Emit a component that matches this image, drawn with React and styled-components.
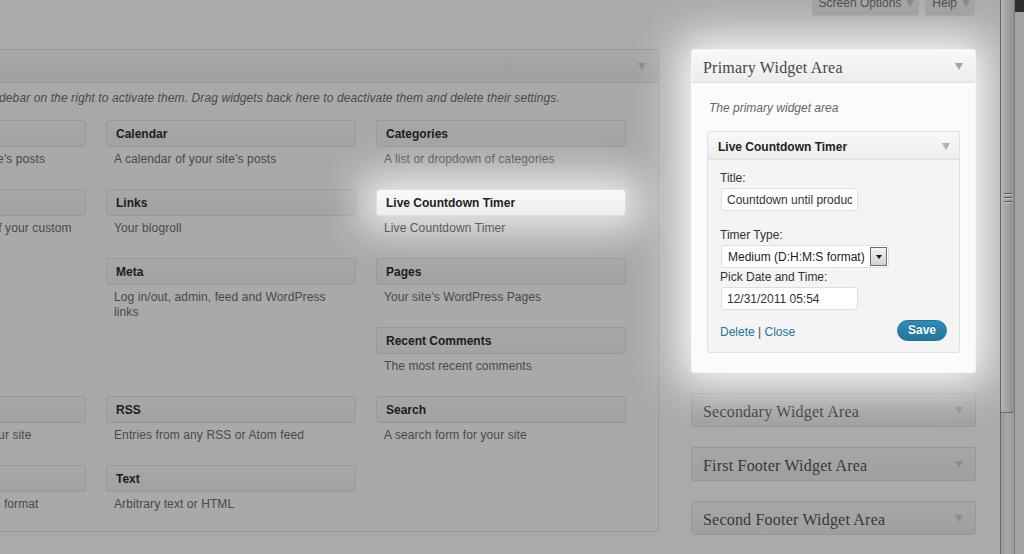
import React from 'react';
import styled, { createGlobalStyle, css } from 'styled-components';

const GlobalStyle = createGlobalStyle`
  html, body {
    margin: 0;
    padding: 0;
    overflow: hidden;
    background: #aaaaaa;
  }
  body {
    font-family: "Liberation Sans", Arial, sans-serif;
    font-size: 12px;
    color: #333;
  }
`;

const Page = styled.div`
  display: flex;
  width: 1024px;
  height: 554px;
  background: #aaaaaa;
`;

const Main = styled.div`
  position: relative;
  flex: none;
  width: 1000px;
  height: 554px;
  overflow: hidden;
  padding-right: 25px;
  box-sizing: border-box;
`;

/* ---------- top tabs ---------- */

const TopBar = styled.div`
  position: relative;
  z-index: 3;
  display: flex;
  justify-content: flex-end;
  align-items: flex-start;
  gap: 6px;
  height: 15px;
`;

const ScreenTab = styled.div`
  display: flex;
  align-items: center;
  gap: 5px;
  height: 24px;
  margin-top: -9px;
  padding: 0 5px 0 7px;
  background: linear-gradient(#a7a7a7, #a1a1a1);
  border-radius: 0 0 3px 3px;
  box-shadow: 0 1px 1px rgba(0, 0, 0, 0.08);
  color: #4e4e4e;
  line-height: 24px;
`;

const Caret = styled.span`
  display: inline-block;
  flex: none;
  width: 0;
  height: 0;
  border-left: ${(p) => p.$size || 4}px solid transparent;
  border-right: ${(p) => p.$size || 4}px solid transparent;
  border-top: ${(p) => (p.$size ? p.$size + 1 : 7)}px solid ${(p) => p.$color || '#8c8c8c'};
`;

/* ---------- column layout ---------- */

const Columns = styled.div`
  display: flex;
  align-items: flex-start;
  gap: 32px;
  margin-top: 34px;
  margin-left: -179px;
`;

// soft white halo painted behind an element's own content
const halo = ({ blur, spread, alpha, height = null }) => css`
  position: relative;
  z-index: 1;
  &::before {
    content: '';
    position: absolute;
    top: 0;
    left: 0;
    right: 0;
    ${height ? `height: ${height}px;` : 'bottom: 0;'}
    z-index: -1;
    border-radius: 4px;
    box-shadow: 0 0 ${blur}px ${spread}px rgba(255, 255, 255, ${alpha});
  }
`;

/* ---------- available widgets ---------- */

const AvailablePanel = styled.section`
  flex: none;
  width: 838px;
  box-sizing: border-box;
  border: 1px solid #989898;
  border-radius: 3px;
  background: #a9a9a9;
`;

const PanelHeader = styled.div`
  display: flex;
  align-items: center;
  justify-content: space-between;
  box-sizing: border-box;
  padding: 3px 12px 0 11px;
  border-bottom: 1px solid ${(p) => (p.$lit ? '#dfdfdf' : '#999999')};
  border-radius: 3px 3px 0 0;
  background: ${(p) =>
    p.$lit ? 'linear-gradient(#f9f9f9, #ececec)' : 'linear-gradient(#a7a7a7, #9f9f9f)'};
  font-family: "Liberation Serif", "Times New Roman", serif;
  font-size: 16px;
  letter-spacing: 0.2px;
  color: ${(p) => (p.$lit ? '#464646' : '#383838')};
  ${(p) =>
    p.$collapsed
      ? css`
          height: 32px;
          border-bottom: none;
          border-radius: 3px;
        `
      : css`
          height: 33px;
        `}
`;

const HeaderCaret = styled(Caret)`
  margin-top: -3px;
`;

const HolderNote = styled.p`
  margin: 8px 0 14px 14px;
  font-style: italic;
  line-height: 15px;
  letter-spacing: 0.1px;
  color: #4a4a4a;
  white-space: nowrap;
`;

const WidgetGrid = styled.div`
  display: grid;
  grid-template-columns: repeat(3, 250px);
  grid-template-rows: repeat(5, 69px) 52px;
  column-gap: 20px;
  padding: 0 0 14px 14px;
`;

const WidgetCell = styled.div`
  ${(p) => p.$lit && halo({ blur: 36, spread: 16, alpha: 0.7, height: 27 })}
`;

const WidgetTitle = styled.div`
  height: 25px;
  padding: 0 9px;
  border: 1px solid ${(p) => (p.$lit ? '#dddddd' : '#989898')};
  border-radius: 3px;
  background: ${(p) =>
    p.$lit ? 'linear-gradient(#f9f9f9, #ededed)' : 'linear-gradient(#a7a7a7, #a2a2a2)'};
  font-weight: bold;
  line-height: 26px;
  color: ${(p) => (p.$lit ? '#222' : '#1c1c1c')};
`;

const WidgetDesc = styled.div`
  margin-top: 5px;
  padding: 0 8px;
  line-height: 15px;
  letter-spacing: 0.1px;
  color: ${(p) => (p.$lit ? '#5a5a5a' : '#484848')};
`;

/* ---------- sidebars ---------- */

const Sidebar = styled.div`
  flex: none;
  display: flex;
  flex-direction: column;
  gap: 20px;
  width: 285px;
`;

const SidebarPanel = styled.section`
  box-sizing: border-box;
  border: 1px solid ${(p) => (p.$lit ? '#dfdfdf' : '#979797')};
  border-radius: 3px;
  background: ${(p) => (p.$lit ? '#fbfbfb' : '#a5a5a5')};
  ${(p) => p.$lit && halo({ blur: 44, spread: 14, alpha: 0.93 })}
`;

const SidebarBody = styled.div`
  padding: 0 15px 19px;
`;

const SidebarNote = styled.p`
  margin: 0 0 15px;
  padding: 18px 2px 0;
  font-style: italic;
  line-height: 15px;
  color: #666;
`;

const OpenWidget = styled.div`
  border: 1px solid #dfdfdf;
  border-radius: 3px;
  background: #f4f4f4;
`;

const OpenWidgetHeader = styled.div`
  display: flex;
  align-items: center;
  justify-content: space-between;
  height: 28px;
  box-sizing: border-box;
  padding: 2px 9px 0 10px;
  border-bottom: 1px solid #dfdfdf;
  border-radius: 3px 3px 0 0;
  background: linear-gradient(#f9f9f9, #ececec);
  font-weight: bold;
  color: #222;
`;

const OpenWidgetBody = styled.div`
  padding: 9px 12px 11px;
`;

const FieldLabel = styled.label`
  display: block;
  margin-top: ${(p) => p.$gap || 0}px;
  padding-top: 2px;
  line-height: 15px;
  color: #333;
`;

const TextField = styled.input`
  display: block;
  width: 137px;
  height: 23px;
  box-sizing: border-box;
  margin: 2px 0 0 1px;
  padding: 0 5px;
  border: 1px solid #dfdfdf;
  border-radius: 3px;
  background: #fff;
  font-family: "Liberation Sans", Arial, sans-serif;
  font-size: 12px;
  color: #333;
  outline: none;
`;

const SelectBox = styled.div`
  display: flex;
  align-items: center;
  justify-content: space-between;
  width: 168px;
  height: 23px;
  box-sizing: border-box;
  margin: 2px 0 0 1px;
  padding: 0 1px 0 6px;
  border: 1px solid #dfdfdf;
  border-radius: 3px;
  background: #fff;
  color: #222;
`;

const DropButton = styled.span`
  display: flex;
  align-items: center;
  justify-content: center;
  width: 17px;
  height: 19px;
  box-sizing: border-box;
  border: 1px solid #6d6d6d;
  background: linear-gradient(#f2f2f2, #d2d2d2);
`;

const Actions = styled.div`
  display: flex;
  align-items: center;
  justify-content: space-between;
  margin-top: 10px;
`;

const LinkRow = styled.div`
  padding-top: 3px;
  color: #464646;
  line-height: 15px;
`;

const Link = styled.a`
  color: #21759b;
  text-decoration: none;
`;

const SaveButton = styled.button`
  height: 21px;
  padding: 0 10px;
  border: 1px solid #21759b;
  border-radius: 11px;
  background: linear-gradient(#2e8cbc, #21759b);
  font-family: "Liberation Sans", Arial, sans-serif;
  font-size: 12px;
  font-weight: bold;
  color: #fff;
  text-shadow: 0 -1px 0 rgba(0, 0, 0, 0.3);
  line-height: 19px;
`;

/* ---------- scrollbar ---------- */

const ScrollBar = styled.div`
  flex: none;
  display: flex;
  width: 24px;
  height: 554px;
`;

const Track = styled.div`
  width: 15px;
  box-sizing: border-box;
  border-left: 1px solid #666;
  border-right: 1px solid #7c7c7c;
  background: linear-gradient(to right, #9a9a9a, #a6a6a6 50%, #9c9c9c);
`;

const Thumb = styled.div`
  display: flex;
  flex-direction: column;
  align-items: center;
  gap: 2px;
  height: 413px;
  box-sizing: border-box;
  padding-top: 193px;
  border-bottom: 1px solid #656565;
  border-radius: 0 0 2px 2px;
  background: linear-gradient(to right, #b4b4b4, #a5a5a5 45%, #8f8f8f);
`;

const GripLine = styled.span`
  width: 8px;
  height: 1px;
  border-bottom: 1px solid #c4c4c4;
  background: #555;
`;

const Gutter = styled.div`
  width: 9px;
  background: #a3a3a3;
`;

const GutterCap = styled.div`
  height: 12px;
  background: #2e2e2e;
`;

/* ---------- data ---------- */

const widgets = [
  { title: 'Archives', desc: 'A monthly archive of your site’s posts' },
  { title: 'Calendar', desc: 'A calendar of your site’s posts' },
  { title: 'Categories', desc: 'A list or dropdown of categories' },
  { title: 'Custom Menu', desc: 'Use this widget to add one of your custom menus as a widget.' },
  { title: 'Links', desc: 'Your blogroll' },
  { title: 'Live Countdown Timer', desc: 'Live Countdown Timer', lit: true },
  null,
  { title: 'Meta', desc: 'Log in/out, admin, feed and WordPress links' },
  { title: 'Pages', desc: 'Your site’s WordPress Pages' },
  null,
  null,
  { title: 'Recent Comments', desc: 'The most recent comments' },
  { title: 'Recent Posts', desc: 'The most recent posts on your site' },
  { title: 'RSS', desc: 'Entries from any RSS or Atom feed' },
  { title: 'Search', desc: 'A search form for your site' },
  { title: 'Tag Cloud', desc: 'Your most used tags in cloud format' },
  { title: 'Text', desc: 'Arbitrary text or HTML' },
  null,
];

const closedAreas = ['Secondary Widget Area', 'First Footer Widget Area', 'Second Footer Widget Area'];

export default function App() {
  return (
    <>
      <GlobalStyle />
      <Page>
        <Main>
          <TopBar>
            <ScreenTab>
              Screen Options <Caret $color="#8a8a8a" />
            </ScreenTab>
            <ScreenTab>
              Help <Caret $color="#8a8a8a" />
            </ScreenTab>
          </TopBar>

          <Columns>
            <AvailablePanel>
              <PanelHeader>
                <span>Available Widgets</span>
                <HeaderCaret $color="#878787" />
              </PanelHeader>
              <HolderNote>
                Drag widgets from here to a sidebar on the right to activate them. Drag widgets back
                here to deactivate them and delete their settings.
              </HolderNote>
              <WidgetGrid>
                {widgets.map((w, i) =>
                  w ? (
                    <WidgetCell key={i} $lit={w.lit}>
                      <WidgetTitle $lit={w.lit}>{w.title}</WidgetTitle>
                      <WidgetDesc $lit={w.lit}>{w.desc}</WidgetDesc>
                    </WidgetCell>
                  ) : (
                    <div key={i} />
                  )
                )}
              </WidgetGrid>
            </AvailablePanel>

            <Sidebar>
              <SidebarPanel $lit>
                <PanelHeader $lit>
                  <span>Primary Widget Area</span>
                  <HeaderCaret $color="#a3a3a3" />
                </PanelHeader>
                <SidebarBody>
                  <SidebarNote>The primary widget area</SidebarNote>
                  <OpenWidget>
                    <OpenWidgetHeader>
                      <span>Live Countdown Timer</span>
                      <Caret $color="#b0b0b0" />
                    </OpenWidgetHeader>
                    <OpenWidgetBody>
                      <FieldLabel>Title:</FieldLabel>
                      <TextField readOnly defaultValue="Countdown until product launch" />
                      <FieldLabel $gap={15}>Timer Type:</FieldLabel>
                      <SelectBox>
                        <span>Medium (D:H:M:S format)</span>
                        <DropButton>
                          <Caret $size={3} $color="#111" />
                        </DropButton>
                      </SelectBox>
                      <FieldLabel>Pick Date and Time:</FieldLabel>
                      <TextField readOnly defaultValue="12/31/2011 05:54" />
                      <Actions>
                        <LinkRow>
                          <Link href="#">Delete</Link> | <Link href="#">Close</Link>
                        </LinkRow>
                        <SaveButton type="button">Save</SaveButton>
                      </Actions>
                    </OpenWidgetBody>
                  </OpenWidget>
                </SidebarBody>
              </SidebarPanel>

              {closedAreas.map((name) => (
                <SidebarPanel key={name}>
                  <PanelHeader $collapsed>
                    <span>{name}</span>
                    <HeaderCaret $color="#8c8c8c" />
                  </PanelHeader>
                </SidebarPanel>
              ))}
            </Sidebar>
          </Columns>
        </Main>

        <ScrollBar>
          <Track>
            <Thumb>
              <GripLine />
              <GripLine />
              <GripLine />
            </Thumb>
          </Track>
          <Gutter>
            <GutterCap />
          </Gutter>
        </ScrollBar>
      </Page>
    </>
  );
}
